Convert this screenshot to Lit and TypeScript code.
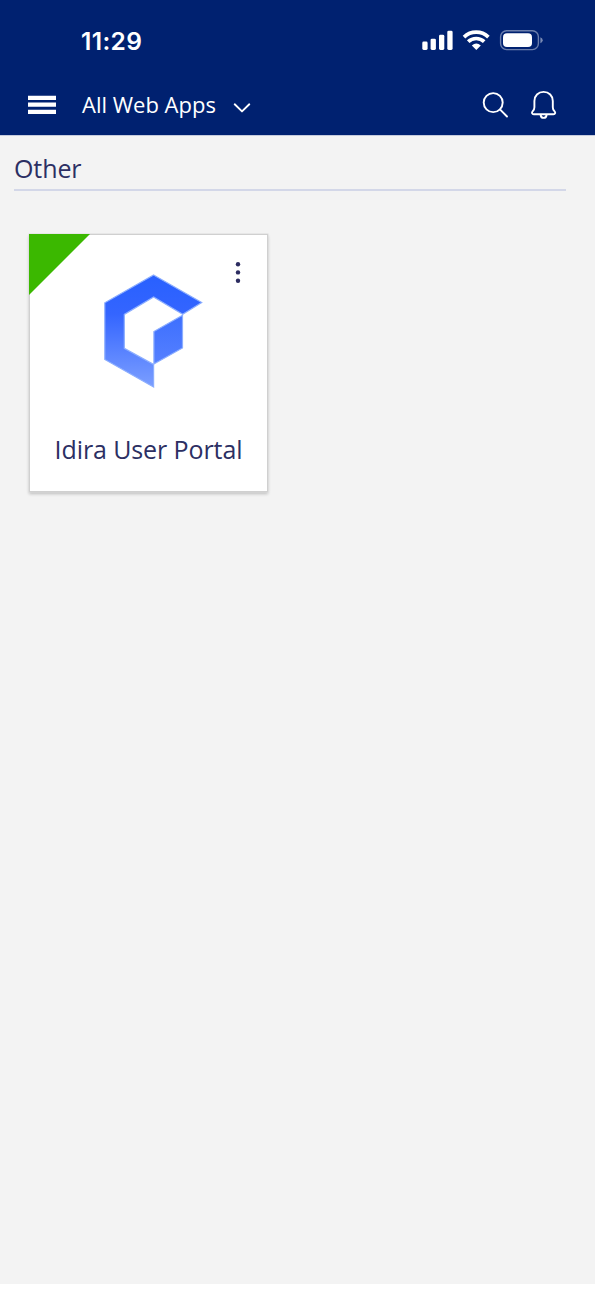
import { LitElement, html, css } from "lit";
import { customElement, property } from "lit/decorators.js";

@customElement("status-bar")
class StatusBar extends LitElement {
  static styles = css`
    :host { display: flex; height: 80px; box-sizing: border-box; padding: 25px 49px 0 81px; justify-content: space-between; align-items: flex-start; }
    .time { font: 600 24.5px/32px Inter, sans-serif; letter-spacing: 0.35px; }
    svg { display: block; }
  `;
  render() {
    return html`
      <span class="time">11:29</span>
      <svg width="125" height="30" viewBox="421 25 125 30" fill="#fff">
        <rect x="422.3" y="41.6" width="5.3" height="8.4" rx="1.4" />
        <rect x="430.6" y="38.7" width="5.3" height="11.3" rx="1.4" />
        <rect x="439" y="34.8" width="5.3" height="15.2" rx="1.4" />
        <rect x="447.3" y="30.7" width="5.3" height="19.3" rx="1.4" />
        <g fill="none" stroke="#fff" stroke-width="3.7">
          <path d="M464 37.1A17.7 17.7 0 0 1 488.4 37.1" />
          <path d="M468.2 41.7A11.6 11.6 0 0 1 484.2 41.7" />
        </g>
        <path d="M476.3 49.9L471.8 45.4Q476.3 41.5 480.8 45.4Z" />
        <rect x="500.6" y="30.8" width="37.8" height="18.8" rx="6" fill="none" stroke="#fff" stroke-opacity=".42" stroke-width="1.4" />
        <rect x="503" y="33.3" width="29" height="13.8" rx="4" />
        <path d="M540.4 37.2Q542.7 38 542.7 40.2T540.4 43.2Z" fill-opacity=".48" />
      </svg>
    `;
  }
}

@customElement("nav-bar")
class NavBar extends LitElement {
  @property() label = "";
  static styles = css`
    :host { display: flex; height: 55px; box-sizing: border-box; padding: 0 38px 0 28px; align-items: flex-start; }
    svg { display: block; flex: none; }
    .menu { margin: 15px 26px 0 0; }
    .label { font: 400 22px/30px "Open Sans", sans-serif; margin-top: 9px; white-space: nowrap; }
    .caret { margin: 22px 0 0 17px; }
    .search { margin: 11px 22px 0 auto; }
    .bell { margin-top: 10px; }
  `;
  render() {
    return html`
      <svg class="menu" width="28" height="20" viewBox="0 0 28 20" fill="#fff">
        <path d="M0 .7h28v4.2H0zM0 7.6h28v4.2H0zM0 14.7h28v4.2H0z" />
      </svg>
      <span class="label">${this.label}</span>
      <svg class="caret" width="18" height="12" viewBox="0 0 18 12" fill="none" stroke="#fff" stroke-width="1.9" stroke-linecap="round" stroke-linejoin="round">
        <path d="M1.7 2.3L9 9.4L16.3 2.3" />
      </svg>
      <svg class="search" width="27" height="28" viewBox="482 91 27 28" fill="none" stroke="#fff" stroke-width="1.9" stroke-linecap="round">
        <circle cx="493.2" cy="102.6" r="9.5" /><path d="M500.2 109.6L507 116.5" />
      </svg>
      <svg class="bell" width="26" height="30" viewBox="531 90 26 30" fill="none" stroke="#fff" stroke-width="1.9" stroke-linejoin="round">
        <path d="M543.6 91.9C538.2 91.9 534.4 95.8 534.4 101V107.3C534.4 109.3 534 110 532.8 111.2C531.4 112.8 532 114.2 533.8 114.2H553.4C555.2 114.2 555.8 112.8 554.4 111.2C553.2 110 552.8 109.3 552.8 107.3V101C552.8 95.8 549 91.9 543.6 91.9Z" />
        <path d="M540.6 114.6C540.8 119 546.4 119 546.6 114.6" />
      </svg>
    `;
  }
}

@customElement("app-card")
class AppCard extends LitElement {
  @property() name = "";
  static styles = css`
    :host { display: block; position: relative; width: 239px; height: 258px; box-sizing: border-box; border: 1px solid #d0d0d0; background: #fff; box-shadow: 0 0 0 0.5px #dedede, 0 2px 3px rgba(0, 0, 0, 0.22); }
    .flag { position: absolute; left: -1px; top: -1px; width: 61px; height: 61px; background: #3bb800; clip-path: polygon(0 0, 100% 0, 0 100%); }
    .more { position: absolute; right: 25px; top: 26px; }
    .logo { display: block; margin: 35px 0 0 70px; }
    .name { margin-top: 40px; text-align: center; font: 400 25px/34px "Open Sans", sans-serif; color: #2c2f63; white-space: nowrap; letter-spacing: -0.1px; }
  `;
  render() {
    return html`
      <div class="flag"></div>
      <svg class="more" width="8" height="24" viewBox="0 0 8 24" fill="#2c2c60">
        <circle cx="4" cy="3.2" r="2.2" /><circle cx="4" cy="11.4" r="2.2" /><circle cx="4" cy="19.7" r="2.2" />
      </svg>
      <svg class="logo" width="110" height="122" viewBox="100 270 110 122">
        <defs>
          <linearGradient id="shade" gradientUnits="userSpaceOnUse" x1="0" y1="274" x2="0" y2="388">
            <stop offset="0" stop-color="#2860ff" /><stop offset=".35" stop-color="#3465ff" /><stop offset="1" stop-color="#7c9fff" />
          </linearGradient>
          <linearGradient id="panel" gradientUnits="userSpaceOnUse" x1="0" y1="315" x2="0" y2="364">
            <stop offset="0" stop-color="#3d6ffe" /><stop offset="1" stop-color="#5580ff" />
          </linearGradient>
        </defs>
        <g stroke="#8caeff" stroke-width="1.2">
          <path fill="url(#shade)" d="M153.6 275L201.7 302.6L182.7 314.3L153.6 297L124.3 314.4V348.3L153.6 364.4V387L104.8 359.4V302.8Z" />
          <path fill="url(#panel)" d="M182.5 315.3V348L153.9 363.9V331.6Z" />
        </g>
      </svg>
      <div class="name">${this.name}</div>
    `;
  }
}

@customElement("app-root")
class AppRoot extends LitElement {
  static styles = css`
    :host { display: flex; flex-direction: column; height: 1290px; box-sizing: border-box; padding-bottom: 6px; background: #fff; overflow: hidden; }
    header { background: #002170; color: #fff; height: 135px; flex: none; box-shadow: 0 1px 0 #c5cbdd; position: relative; }
    main { flex: 1; background: #f3f3f3; padding: 0 29px 0 14px; }
    h2 { margin: 0; height: 56px; box-sizing: border-box; padding-top: 16px; border-bottom: 2px solid #d3d7e8; font: 400 25px/34px "Open Sans", sans-serif; color: #2c2f63; letter-spacing: -0.1px; }
    .apps { display: flex; padding: 43px 0 0 15px; }
  `;
  render() {
    return html`
      <header>
        <status-bar></status-bar>
        <nav-bar label="All Web Apps"></nav-bar>
      </header>
      <main>
        <h2>Other</h2>
        <div class="apps"><app-card name="Idira User Portal"></app-card></div>
      </main>
    `;
  }
}
